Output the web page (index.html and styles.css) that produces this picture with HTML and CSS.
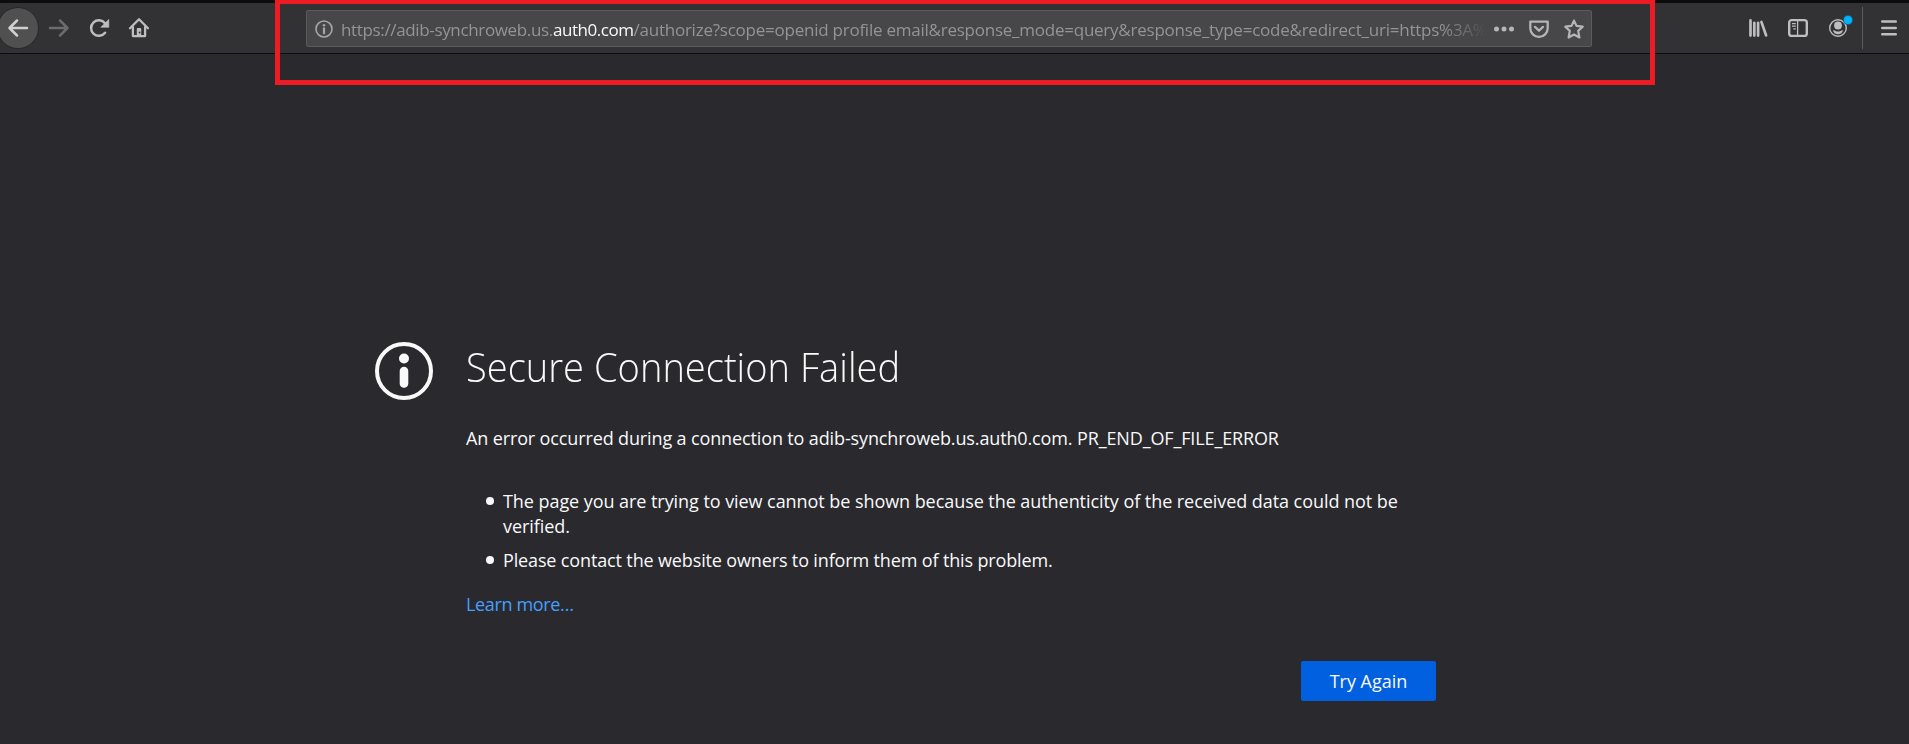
FILE: index.html
```
<!DOCTYPE html>
<html lang="en">
<head>
<meta charset="utf-8">
<title>Secure Connection Failed</title>
<link rel="stylesheet" href="styles.css">
</head>
<body>
<header class="toolbar">
  <nav class="nav">
    <span class="tool back"><svg width="24" height="24" viewBox="0 0 24 24"><path d="M21 12H4M11 4.500L3.500 12l7.500 7.500" fill="none" stroke="currentColor" stroke-width="2.500" stroke-linecap="round" stroke-linejoin="round"/></svg></span>
    <span class="tool forward"><svg width="24" height="24" viewBox="0 0 24 24"><path d="M3 12h17M13 4.500l7.500 7.500-7.500 7.500" fill="none" stroke="currentColor" stroke-width="2.500" stroke-linecap="round" stroke-linejoin="round"/></svg></span>
    <span class="tool"><svg width="24" height="24" viewBox="0 0 24 24"><path d="M18.100 16.800A7.800 7.800 0 1 1 18 7.200" fill="none" stroke="currentColor" stroke-width="2.500" stroke-linecap="round"/><path d="M21.800 3.500v7.800h-8z" fill="currentColor" stroke="currentColor" stroke-linejoin="round" stroke-width=".6"/></svg></span>
    <span class="tool"><svg width="24" height="24" viewBox="0 0 24 24"><path d="M3 12.300L12 3.300l9 9M5.900 11v9.100h12.200V11" fill="none" stroke="currentColor" stroke-width="2.300" stroke-linecap="round" stroke-linejoin="round"/><path d="M9.800 20.500V13q0-.9.900-.9h2.600q.9 0 .9.900v7.500z" fill="currentColor"/><circle cx="12.600" cy="16.500" r=".9" fill="#323234"/></svg></span>
  </nav>
  <div class="urlbar">
    <svg class="identity" width="18" height="18" viewBox="0 0 18 18"><circle cx="9" cy="9" r="8" fill="none" stroke="currentColor" stroke-width="1.600"/><circle cx="9" cy="5.200" r="1.300" fill="currentColor"/><path d="M9 8.300v5" stroke="currentColor" stroke-width="2.200" stroke-linecap="round"/></svg>
    <div class="url"><span class="host">https://adib-synchroweb.us.<b>auth0.com</b></span><span class="path">/authorize?scope=openid profile email&amp;response_mode=query&amp;response_type=code&amp;redirect_uri=https%3A%</span></div>
    <div class="actions">
      <svg width="20" height="20" viewBox="0 0 20 20" fill="currentColor"><circle cx="2.500" cy="10" r="2.500"/><circle cx="10" cy="10" r="2.500"/><circle cx="17.500" cy="10" r="2.500"/></svg>
      <svg width="20" height="20" viewBox="0 0 20 20" fill="none" stroke="currentColor" stroke-width="2.300" stroke-linecap="round" stroke-linejoin="round"><path d="M1.300 2.700h17.400v6.500a8.700 8.700 0 0 1-17.400 0z"/><path d="M6 7.900l4 3.800 4-3.800"/></svg>
      <svg width="20" height="20" viewBox="0 0 20 20" fill="none" stroke="currentColor" stroke-width="2.200" stroke-linejoin="round"><path d="M10 1.600l2.500 5.300 6.200.8-4.500 4.200 1.200 6.600L10 15.500l-5.400 3 1.200-6.600L1.300 7.700l6.200-.8z"/></svg>
    </div>
  </div>
  <div class="tools">
    <span class="tool"><svg width="20" height="20" viewBox="0 0 20 20" fill="none" stroke="currentColor" stroke-width="2.700" stroke-linecap="round"><path d="M2.500 2.400v15.200M6.300 4.800v12.800M10.100 4.800v12.800M13.400 3.900l4.700 13.500"/></svg></span>
    <span class="tool"><svg width="20" height="20" viewBox="0 0 20 20" fill="none" stroke="currentColor"><rect x="1.200" y="2.100" width="17.600" height="15.800" rx="2.500" stroke-width="2.400"/><path d="M9.600 2v16" stroke-width="1.300"/><path d="M4 5.600h3.800M4 8.100h3.800M5.300 10.800h2.500" stroke-width="1.300"/></svg></span>
    <span class="tool account"><svg width="20" height="20" viewBox="0 0 20 20"><circle cx="10" cy="10" r="8.300" fill="none" stroke="currentColor" stroke-width="1.400"/><circle cx="10" cy="7.500" r="3.900" fill="currentColor"/><path d="M5 12.200q2 .1 3 1 2 .8 4 0 1-.9 3-1-.8 4-5 4t-5-4z" fill="currentColor"/></svg><i class="badge"></i></span>
    <span class="divider"></span>
    <span class="menu"><svg width="16" height="16" viewBox="0 0 16 16" stroke="currentColor" stroke-width="2.400" stroke-linecap="round"><path d="M1.200 1.500h13.600M1.200 8h13.600M1.200 14.300h13.600"/></svg></span>
  </div>
</header>
<div class="highlight"></div>
<main class="error">
  <svg class="info" width="58" height="58" viewBox="0 0 58 58"><circle cx="29" cy="29" r="27" fill="none" stroke="currentColor" stroke-width="4"/><circle cx="29" cy="16.500" r="5" fill="currentColor"/><path d="M29 29v12.500" stroke="currentColor" stroke-width="8.600" stroke-linecap="round"/></svg>
  <section class="body">
    <h1>Secure Connection Failed</h1>
    <p class="desc">An error occurred during a connection to adib-synchroweb.us.auth0.com. PR_END_OF_FILE_ERROR</p>
    <ul>
      <li>The page you are trying to view cannot be shown because the authenticity of the received data could not be<br>verified.</li>
      <li class="contact">Please contact the website owners to inform them of this problem.</li>
    </ul>
    <a class="learn">Learn more…</a>
    <div class="buttons"><button>Try Again</button></div>
  </section>
</main>
</body>
</html>
```
FILE: styles.css
```
* { box-sizing: border-box; }
body {
  margin: 0;
  height: 744px;
  overflow: hidden;
  background: #2a2a2e;
  color: #f9f9fa;
  font-family: "Open Sans", "Noto Sans", sans-serif;
  font-size: 18px;
}
.toolbar {
  display: flex;
  height: 54px;
  border-top: 3px solid #0c0c0d;
  border-bottom: 1px solid #0c0c0d;
  background: #323234;
  color: #bebebf;
}
.nav { display: flex; align-items: center; width: 308px; margin-left: -2px; }
.tool { display: flex; align-items: center; justify-content: center; width: 40px; height: 42px; }
.back { width: 40px; height: 40px; margin-right: 1px; border-radius: 50%; background: #505051; color: #d0d0d0; box-shadow: 0 0 0 1px #29292b; }
.forward { color: #6c6c6e; }
.urlbar {
  display: flex;
  align-items: center;
  width: 1286px;
  height: 37px;
  margin-top: 7px;
  padding: 0 7px 0 8px;
  border: 1px solid #5b5b5d;
  border-radius: 2px;
  background: #474749;
}
.identity { color: #a6a6a7; }
.url {
  width: 1146px;
  height: 35px;
  margin-left: 8px;
  line-height: 37px;
  font-size: 17px;
  white-space: nowrap;
  color: #949496;
  -webkit-mask-image: linear-gradient(to right, #000 1100px, transparent 1146px);
  mask-image: linear-gradient(to right, #000 1100px, transparent 1146px);
}
.host { letter-spacing: -.35px; }
.url b { font-weight: 400; letter-spacing: -.45px; color: #f9f9fa; }
.path { letter-spacing: -.24px; }
.actions { display: flex; gap: 15px; margin-left: auto; color: #b5b5b6; }
.tools { display: flex; align-items: center; margin-left: auto; }
.account { position: relative; }
.badge { position: absolute; left: 26px; top: 9px; width: 8px; height: 8px; border-radius: 50%; background: #00b3fb; box-shadow: 0 0 0 1px #14648a; }
.divider { width: 1px; height: 42px; margin-left: 4px; background: #5c5c5e; }
.menu { display: flex; margin: 0 12px 0 18px; }
.highlight { position: absolute; left: 275px; top: -1px; width: 1380px; height: 86px; border: 5px solid #ed1c24; }
.error { display: flex; gap: 33px; padding: 288px 0 0 375px; }
.body { width: 970px; }
h1 { margin: -6px 0 0; height: 60px; line-height: 60px; font-size: 41px; font-weight: 300; white-space: nowrap; transform: scaleX(.929); transform-origin: 0 0; }
.desc { margin: 30px 0 0; line-height: 25px; letter-spacing: -.13px; white-space: nowrap; }
ul { margin: 38px 0 0; padding: 0 0 0 37px; list-style: none; line-height: 25px; letter-spacing: -.06px; white-space: nowrap; }
li { margin-bottom: 9px; }
.contact { letter-spacing: -.14px; }
li::before { content: ""; float: left; width: 8px; height: 8px; margin: 8px 0 0 -17px; border-radius: 50%; background: currentColor; }
.learn { display: block; margin-top: 19px; line-height: 25px; letter-spacing: -.35px; color: #459fff; }
.buttons { display: flex; justify-content: flex-end; margin-top: 44px; }
button { width: 135px; height: 40px; padding: 0; border: 0; border-radius: 2px; background: #0060df; color: #f9f9fa; font: inherit; }
```
